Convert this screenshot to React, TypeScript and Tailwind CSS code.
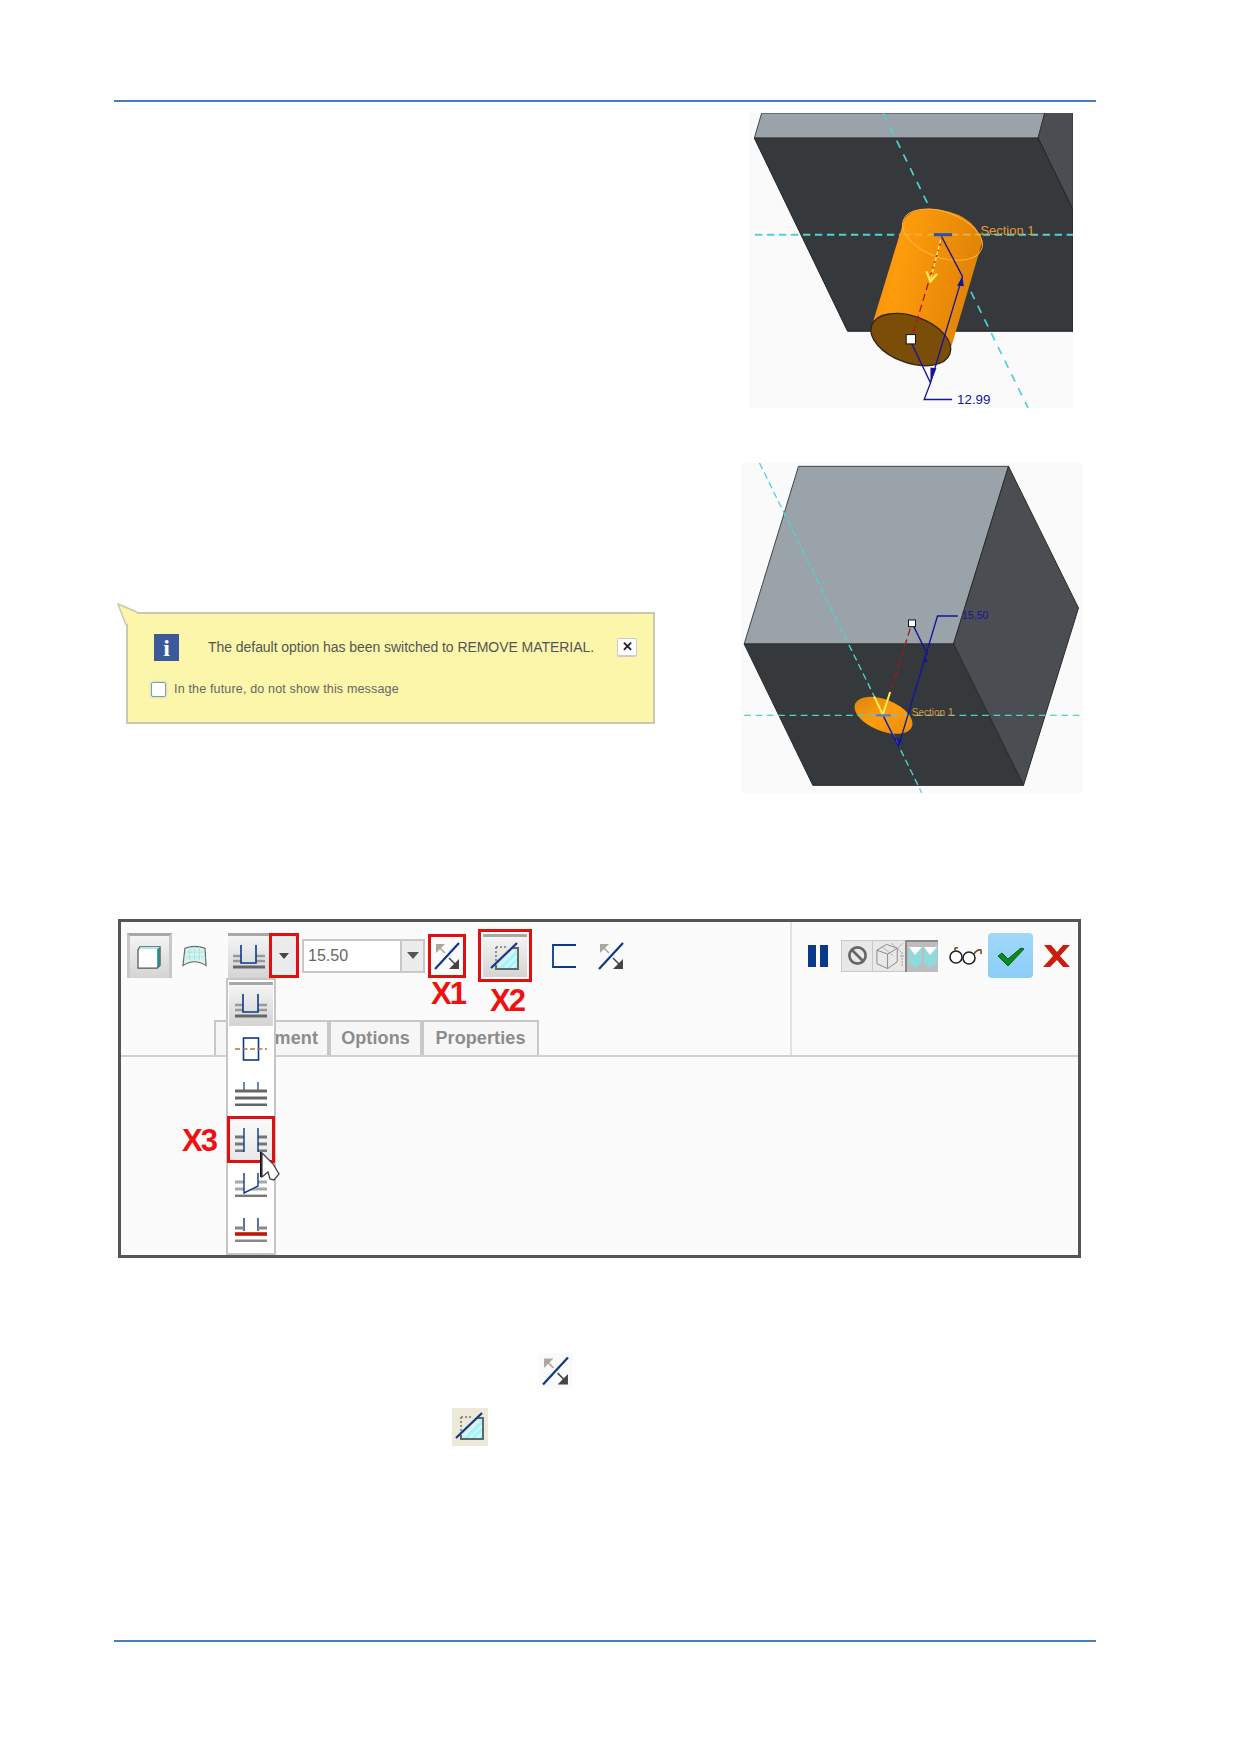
import React from "react";

const CYAN = "#4fd2d2";
const BLUE = "#14149c";
const NAVY = "#0b3a8c";

const CylinderFigure = () => (
  <svg viewBox="27 40 973 885" className="w-[324px] h-[295px] bg-[#fafafa] block shrink-0">
    <defs>
      <linearGradient id="cyl" x1="0" y1="0" x2="1" y2="0.25">
        <stop offset="0" stopColor="#e88c08" />
        <stop offset="0.3" stopColor="#ff9c0c" />
        <stop offset="1" stopColor="#e08406" />
      </linearGradient>
    </defs>
    <polygon points="65,40 915,40 895,115 43,115" fill="#9aa3aa" stroke="#444" strokeWidth="3" />
    <polygon points="915,40 1000,40 1000,330 895,115" fill="#4a4e52" stroke="#333" strokeWidth="3" />
    <polygon points="43,115 895,115 1000,330 1000,695 323,695" fill="#36393c" stroke="#222" strokeWidth="3" />
    <line x1="45" y1="405" x2="1000" y2="405" stroke={CYAN} strokeWidth="6" strokeDasharray="22 14" />
    <line x1="430" y1="40" x2="865" y2="925" stroke={CYAN} strokeWidth="5" strokeDasharray="24 22" />
    <path d="M490,370 Q500,330 570,327 Q700,335 728,425 L635,740 L400,665 Z" fill="url(#cyl)" />
    <line x1="490" y1="405" x2="725" y2="405" stroke="#f0b040" strokeWidth="5" strokeDasharray="22 14" />
    <ellipse cx="608" cy="405" rx="125" ry="68" transform="rotate(20 608 405)" fill="none" stroke="#ffb040" strokeWidth="3" />
    <ellipse cx="513" cy="720" rx="125" ry="70" transform="rotate(20 513 720)" fill="#7a4e08" stroke="#33250f" strokeWidth="4" />
    <line x1="605" y1="420" x2="520" y2="700" stroke="#b01818" strokeWidth="4" strokeDasharray="22 12" />
    <line x1="603" y1="420" x2="573" y2="535" stroke="#ffee50" strokeWidth="5" strokeDasharray="12 6" />
    <path d="M560,515 L572,545 L592,522" fill="none" stroke="#ffee50" strokeWidth="7" />
    <line x1="582" y1="405" x2="637" y2="405" stroke="#2a50b0" strokeWidth="9" />
    <path d="M515,730 L572,850 L668,530 L605,410" fill="none" stroke={BLUE} strokeWidth="4" />
    <path d="M572,850 L553,900 L637,900" fill="none" stroke={BLUE} strokeWidth="4" />
    <path d="M668,530 L652,558 L672,560 Z M572,850 L590,806 L572,804 Z" fill={BLUE} />
    <rect x="499" y="705" width="28" height="28" fill="#fff" stroke="#111" strokeWidth="3" />
    <text x="722" y="405" fontSize="39" fill="#e89a30">Section 1</text>
    <text x="652" y="914" fontSize="40" fill={BLUE}>12.99</text>
  </svg>
);

const BlockFigure = () => (
  <svg viewBox="33 25 1022 990" className="w-[341px] h-[330px] bg-[#fafafa] block shrink-0">
    <defs>
      <linearGradient id="hole" x1="0" y1="0" x2="1" y2="0.4">
        <stop offset="0" stopColor="#d88408" />
        <stop offset="0.6" stopColor="#ff9c10" />
        <stop offset="1" stopColor="#f09008" />
      </linearGradient>
    </defs>
    <polygon points="205,35 835,35 670,568 42,568" fill="#9aa3aa" stroke="#444" strokeWidth="3" />
    <polygon points="835,35 1045,460 880,992 670,568" fill="#4a4e52" stroke="#2a2a2a" strokeWidth="3" />
    <polygon points="42,568 670,568 880,992 248,992" fill="#36393c" stroke="#2a2a2a" strokeWidth="3" />
    <ellipse cx="460" cy="782" rx="92" ry="47" transform="rotate(22 460 782)" fill="url(#hole)" />
    <line x1="42" y1="782" x2="1055" y2="782" stroke={CYAN} strokeWidth="4" strokeDasharray="20 14" />
    <line x1="88" y1="25" x2="575" y2="1015" stroke={CYAN} strokeWidth="4" strokeDasharray="20 12" />
    <line x1="540" y1="522" x2="485" y2="700" stroke="#a01818" strokeWidth="4" strokeDasharray="22 12" />
    <path d="M432,725 L458,780 L480,712" fill="none" stroke="#ffee50" strokeWidth="6" />
    <line x1="437" y1="782" x2="482" y2="782" stroke="#6080c8" strokeWidth="7" />
    <path d="M548,510 L592,600 M460,785 L505,875 L622,484 L683,484" fill="none" stroke={BLUE} strokeWidth="4" />
    <path d="M585,600 L578,625 L592,622 Z M505,875 L500,850 L516,855 Z" fill={BLUE} />
    <rect x="535" y="496" width="21" height="20" fill="#fff" stroke="#111" strokeWidth="3" />
    <text x="545" y="783" fontSize="30" fill="#d89a40">Section 1</text>
    <text x="695" y="494" fontSize="32" fill={BLUE}>15.50</text>
  </svg>
);

const FlipIcon = ({ className }: { className: string }) => (
  <svg viewBox="0 0 26 28" className={className}>
    <path d="M2,2 H11 L2,11 Z" fill="#a8a89c" />
    <path d="M6,6 L11,11" stroke="#a8a89c" strokeWidth="1.5" />
    <path d="M25,27 H15 L25,17 Z" fill="#444" />
    <path d="M15,16 L21,22" stroke="#444" strokeWidth="1.5" />
    <line x1="1" y1="27" x2="25" y2="1" stroke={NAVY} strokeWidth="2.2" />
  </svg>
);

const ThickenIcon = ({ className }: { className: string }) => (
  <svg viewBox="0 0 30 30" className={className}>
    <path d="M6,5 H18 M6,5 V20" stroke="#777" strokeWidth="1.6" strokeDasharray="2 2" fill="none" />
    <polygon points="6,27 28,6 28,27" fill="#a8f4fa" />
    <path d="M14,27 L28,13 M21,27 L28,20 M9,24 L24,9" stroke="#d8fbfd" strokeWidth="1.5" />
    <path d="M22,6 H28 V27 H6 V23" fill="none" stroke="#666" strokeWidth="2" />
    <line x1="1" y1="26" x2="27" y2="1" stroke={NAVY} strokeWidth="2.2" />
  </svg>
);

const SolidIcon = () => (
  <svg viewBox="0 0 26 24" className="w-[25px] h-[23px]">
    <path d="M1,4 L3,1 H24 V20 L21,23 H1 Z" fill="#fff" stroke="#555" strokeWidth="1.3" />
    <path d="M2,3 L4,1 H24 L21,3 Z" fill="#a6eef2" />
    <path d="M21,3 L24,1 V20 L21,23 Z" fill="#2f8a90" />
  </svg>
);

const SurfaceIcon = () => (
  <svg viewBox="0 0 26 24" className="w-[25px] h-[24px]">
    <path d="M1,22 L3,4 Q13,0 24,4 L25,22 Q13,14 1,22 Z" fill="#d4f2ee" stroke="#666" strokeWidth="1.2" />
    <path d="M8,2 V17 M13,2 V16 M18,2 V17 M3,8 H24 M2,13 H25" stroke="#8fd8d2" strokeWidth="1" strokeDasharray="1.5 1.5" />
  </svg>
);

const BlindIcon = () => (
  <svg viewBox="0 0 32 24" className="w-[32px] h-[24px]">
    <path d="M0,11 H8 M23,11 H32 M0,16 H8 M23,16 H32" stroke="#999" strokeWidth="2.4" />
    <path d="M0,22 H32" stroke="#666" strokeWidth="3" />
    <path d="M8,0 V18 H23 V0" fill="none" stroke={NAVY} strokeWidth="1.6" />
  </svg>
);

const SymmetricIcon = () => (
  <svg viewBox="0 0 32 24" className="w-[32px] h-[24px]">
    <rect x="8.5" y="1" width="15" height="22" fill="none" stroke={NAVY} strokeWidth="1.6" />
    <path d="M0,12 H32" stroke="#a5793e" strokeWidth="1.6" strokeDasharray="5 2.5" />
  </svg>
);

const ThroughAllIcon = () => (
  <svg viewBox="0 0 32 24" className="w-[32px] h-[24px]">
    <path d="M9,0 V8 M23,0 V8" stroke={NAVY} strokeWidth="1.2" />
    <path d="M0,9 H32 M0,16 H32 M0,23 H32" stroke="#666" strokeWidth="3" />
  </svg>
);

const TwoSideIcon = () => (
  <svg viewBox="0 0 32 24" className="w-[32px] h-[24px]">
    <path d="M0,9 H9 M23,9 H32 M0,16 H9 M23,16 H32 M0,23 H9 M23,23 H32" stroke="#777" strokeWidth="2.8" />
    <path d="M9,0 V24 M23,0 V24" stroke={NAVY} strokeWidth="1.4" />
  </svg>
);

const SelectedIcon = () => (
  <svg viewBox="0 0 32 24" className="w-[32px] h-[24px]">
    <path d="M0,9 H32 M0,16 H32" stroke="#a8a8a8" strokeWidth="2.8" />
    <path d="M0,23 H32" stroke="#777" strokeWidth="2.8" />
    <path d="M9,0 V20 L23,13 V0 Z" fill="#fff" stroke="none" />
    <path d="M9,0 V20 L23,13 V0" fill="none" stroke={NAVY} strokeWidth="1.4" />
  </svg>
);

const ToRefIcon = () => (
  <svg viewBox="0 0 32 24" className="w-[32px] h-[24px]">
    <path d="M9,0 V13 M23,0 V13" stroke={NAVY} strokeWidth="1.4" />
    <path d="M0,10 H9 M23,10 H32 M0,23 H32" stroke="#888" strokeWidth="2.8" />
    <path d="M0,16 H32" stroke="#c01808" strokeWidth="3.6" />
  </svg>
);

const Cursor = () => (
  <svg viewBox="0 0 20 32" className="w-[20px] h-[32px]">
    <path d="M1,0 V25" stroke="#111" strokeWidth="2" />
    <path d="M2,25 L8,20 L10,27 L14,28 L19,22 L13,12 L2,1 Z" fill="#fff" stroke="#444" strokeWidth="1.3" />
  </svg>
);

const RedLabel = ({ children, className }: { children: React.ReactNode; className: string }) => (
  <span className={`absolute font-bold text-[31px] leading-none tracking-[-2px] text-[#f01010] ${className}`}>
    {children}
  </span>
);

const Tab = ({ label, className }: { label: string; className: string }) => (
  <div className={`h-[35px] flex items-center border-2 border-b-0 border-[#c8c8c8] bg-[#f6f6f6] text-[18px] tracking-[0.1px] font-bold text-[#8c8c8c] ${className}`}>
    {label}
  </div>
);

const ToolButton = ({ children, className }: { children: React.ReactNode; className: string }) => (
  <div className={`flex items-center justify-center border-t-[3px] border-[#a8a8a8] bg-gradient-to-b from-[#f4f4f4] to-[#d4d4d4] ${className}`}>
    {children}
  </div>
);

const MenuItem = ({ children, className = "" }: { children: React.ReactNode; className?: string }) => (
  <div className={`flex items-center justify-center shrink-0 ${className}`}>{children}</div>
);

const DashboardPanel = () => (
  <div className="relative ml-[4px] w-[963px] h-[339px] border-[3px] border-[#555] bg-[#fbfbfb] flex flex-col">
    <div className="flex h-[135px] border-b-2 border-[#d0d0d0]">
      <div className="w-[669px] flex flex-col">
        <div className="flex items-center h-[55px] mt-[6px] pl-[6px]">
          <ToolButton className="w-[45px] h-[45px] border-l-[3px] border-r-[3px] border-l-[#c8c8c8] border-r-[#c8c8c8]">
            <SolidIcon />
          </ToolButton>
          <div className="ml-[10px] flex"><SurfaceIcon /></div>
          <ToolButton className="ml-[21px] w-[41px] h-[45px]"><BlindIcon /></ToolButton>
          <div className="w-[30px] h-[45px] border-[3px] border-[#e01010] bg-[#ececec] flex items-center justify-center">
            <div className="w-0 h-0 border-x-[5px] border-x-transparent border-t-[6px] border-t-[#444]" />
          </div>
          <div className="ml-[3px] w-[100px] h-[34px] border-2 border-[#c8c8c8] bg-white flex items-center pl-[4px] text-[16px] text-[#666]">15.50</div>
          <div className="w-[23px] h-[34px] border-2 border-l-0 border-[#c8c8c8] bg-[#ececec] flex items-center justify-center">
            <div className="w-0 h-0 border-x-[6px] border-x-transparent border-t-[7px] border-t-[#555]" />
          </div>
          <div className="ml-[3px] w-[38px] h-[44px] border-[3px] border-[#e01010] flex items-center justify-center">
            <FlipIcon className="w-[26px] h-[28px]" />
          </div>
          <div className="ml-[12px] w-[54px] h-[53px] border-[3px] border-[#e01010] p-[2px]">
            <ToolButton className="w-full h-full"><ThickenIcon className="w-[30px] h-[30px]" /></ToolButton>
          </div>
          <svg viewBox="0 0 24 24" className="ml-[20px] w-[24px] h-[24px]">
            <path d="M24,1 H1 V23 H24" fill="none" stroke={NAVY} strokeWidth="1.8" />
          </svg>
          <div className="ml-[22px] flex"><FlipIcon className="w-[26px] h-[28px]" /></div>
        </div>
        <div className="mt-auto flex pl-[93px]">
          <Tab label="ment" className="w-[115px] justify-end pr-[9px]" />
          <Tab label="Options" className="w-[93px] justify-center" />
          <Tab label="Properties" className="w-[117px] justify-center" />
        </div>
      </div>
      <div className="flex-1 border-l-2 border-[#e2e2e2]">
        <div className="flex items-center h-[55px] mt-[6px]">
          <div className="ml-[16px] flex gap-[4px]">
            <div className="w-[8px] h-[22px] bg-[#0b3a8c]" />
            <div className="w-[8px] h-[22px] bg-[#0b3a8c]" />
          </div>
          <div className="ml-[13px] flex h-[32px] bg-[#d8d8d8]">
            <div className="w-[32px] flex items-center justify-center bg-[#e8e8e8] border border-[#c8c8c8]">
              <svg viewBox="0 0 22 22" className="w-[21px] h-[21px]">
                <circle cx="11" cy="11" r="8.5" fill="none" stroke="#666" strokeWidth="2.8" />
                <line x1="5" y1="5" x2="17" y2="17" stroke="#666" strokeWidth="2.8" />
              </svg>
            </div>
            <div className="w-[32px] flex items-center justify-center bg-[#e8e8e8] border-y border-[#c8c8c8]">
              <svg viewBox="0 0 32 28" className="w-[31px] h-[28px]">
                <path d="M3,8 L13,2 L24,6 L14,12 Z M3,8 V22 L14,27 V12 M24,6 V20 L14,27" fill="none" stroke="#888" strokeWidth="1" />
                <path d="M24,6 L30,1 M27,14 H31 M29,10 V24 M18,1 L28,10 M8,4 L20,14" fill="none" stroke="#999" strokeWidth="1" strokeDasharray="2 1" />
              </svg>
            </div>
            <div className="w-[33px] flex items-center justify-center bg-[#bdbdbd] border-l-2 border-t-2 border-[#888]">
              <svg viewBox="0 0 30 24" className="w-[30px] h-[24px]">
                <path d="M1,2 H14 V18 L7,23 L1,18 Z M16,2 H29 V18 L22,23 L16,18 Z" fill="#8fdada" />
                <path d="M1,2 H14 L7,10 Z M16,2 H29 L22,10 Z" fill="#fff" />
              </svg>
            </div>
          </div>
          <svg viewBox="0 0 34 18" className="ml-[10px] w-[34px] h-[18px]">
            <circle cx="8" cy="10" r="6" fill="#fff" stroke="#222" strokeWidth="1.6" />
            <circle cx="21" cy="11" r="6" fill="#fff" stroke="#222" strokeWidth="1.6" />
            <path d="M8,4 Q5,0 10,1 M26,7 Q29,2 33,3 V7" fill="none" stroke="#7a4a20" strokeWidth="1.6" />
          </svg>
          <div className="ml-[6px] w-[45px] h-[45px] rounded-[4px] bg-gradient-to-b from-[#a0d8fa] to-[#8ccdf8] flex items-center justify-center">
            <svg viewBox="0 0 28 22" className="w-[28px] h-[22px]">
              <path d="M1,11 L5,8 L11,14 L24,3 L27,4 L11,21 Z" fill="#0c8a20" stroke="#066014" strokeWidth="1" />
            </svg>
          </div>
          <svg viewBox="0 0 27 24" className="ml-[10px] w-[27px] h-[24px]">
            <path d="M1,1 H8 L14,8 L20,1 H27 L17,12 L27,23 H20 L14,16 L7,23 H0 L10,12 Z" fill="#c8200c" />
          </svg>
        </div>
      </div>
    </div>

    <RedLabel className="left-[310px] top-[56px]">X1</RedLabel>
    <RedLabel className="left-[369px] top-[63px]">X2</RedLabel>
    <RedLabel className="left-[61px] top-[203px]">X3</RedLabel>

    <div className="absolute left-[105px] top-[56px] w-[50px] h-[277px] border-2 border-[#c6c6c6] bg-white flex flex-col items-center">
      <MenuItem className="w-[44px] h-[44px] mt-[2px] border-t-[3px] border-[#a8a8a8] bg-gradient-to-b from-[#f4f4f4] to-[#d4d4d4]"><BlindIcon /></MenuItem>
      <MenuItem className="h-[46px] w-full"><SymmetricIcon /></MenuItem>
      <MenuItem className="h-[44px] w-full"><ThroughAllIcon /></MenuItem>
      <MenuItem className="h-[47px] w-[48px] border-[3px] border-[#e01010] bg-gradient-to-b from-[#fafafa] to-[#e8e8e8]"><TwoSideIcon /></MenuItem>
      <MenuItem className="h-[44px] w-full"><SelectedIcon /></MenuItem>
      <MenuItem className="h-[45px] w-full"><ToRefIcon /></MenuItem>
    </div>
    <div className="absolute left-[139px] top-[230px] flex"><Cursor /></div>
  </div>
);

export default function App() {
  return (
    <div className="w-[1240px] h-[1754px] bg-white flex flex-col pl-[114px] pb-[112px] font-['Liberation_Sans',sans-serif]">
      <div className="mt-[100px] w-[982px] h-[2px] bg-[#4a7ebb] shrink-0" />

      <div className="mt-[11px] ml-[635px] flex">
        <CylinderFigure />
      </div>

      <div className="mt-[55px] flex items-start">
        <div className="relative ml-[12px] mt-[149px] w-[529px] h-[112px] border-2 border-[#c8c8b4] bg-[#fbf6a9]">
          <svg viewBox="0 0 24 24" className="absolute left-[-11px] top-[-11px] w-[24px] h-[24px]">
            <path d="M9,22 L9,10 L20,10 Z" fill="#fbf6a9" />
            <path d="M9,22 L1,1 L20,9" fill="#fbf6a9" stroke="#c8c8b4" strokeWidth="1.5" />
            <path d="M10,11 H22 V13 H10 Z" fill="#fbf6a9" />
          </svg>
          <div className="flex items-center pt-[20px] pl-[26px] pr-[16px]">
            <div className="w-[25px] h-[27px] bg-[#3c5a9a] flex items-center justify-center font-['Liberation_Serif',serif] font-bold text-[24px] text-white">i</div>
            <span className="ml-[29px] text-[14px] tracking-[-0.05px] text-[#555] whitespace-nowrap">The default option has been switched to REMOVE MATERIAL.</span>
            <div className="ml-auto w-[20px] h-[19px] rounded-[2px] border border-[#ccc] border-b-2 bg-white flex items-center justify-center text-[13px] font-bold text-[#222]">✕</div>
          </div>
          <div className="flex items-center mt-[19px] pl-[23px]">
            <div className="w-[15px] h-[15px] rounded-[2px] border border-[#8a9a9a] bg-white shadow-[0_0_2px_1px_#c4e8d0]" />
            <span className="ml-[8px] text-[12.5px] tracking-[0.17px] text-[#666] whitespace-nowrap">In the future, do not show this message</span>
          </div>
        </div>
        <div className="ml-[86px]">
          <BlockFigure />
        </div>
      </div>

      <div className="mt-[126px]">
        <DashboardPanel />
      </div>

      <div className="mt-[95px] ml-[424px] w-[34px] h-[35px] bg-[#fafafa] flex items-center justify-center">
        <FlipIcon className="w-[27px] h-[30px]" />
      </div>
      <div className="mt-[20px] ml-[338px] w-[36px] h-[38px] bg-[#ece9d8] flex items-center justify-center">
        <ThickenIcon className="w-[30px] h-[30px]" />
      </div>

      <div className="mt-auto w-[982px] h-[2px] bg-[#4a7ebb] shrink-0" />
    </div>
  );
}
